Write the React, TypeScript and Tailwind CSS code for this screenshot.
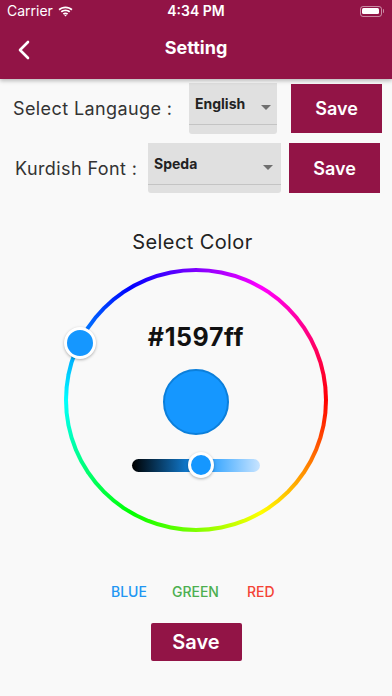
import React from "react";

const font = { fontFamily: "Inter, 'Noto Sans', sans-serif" };

function Arrow() {
  return (
    <svg width="10" height="5" viewBox="0 0 10 5" className="shrink-0">
      <path d="M0 0 L10 0 L5 5 Z" fill="#6f6f6f" />
    </svg>
  );
}

function Dropdown({ label, w, arrowRight }: { label: string; w: string; arrowRight: string }) {
  return (
    <div className={`${w} h-full bg-[#e0e0e0] rounded-b-[3px] flex flex-col`}>
      <div className={`h-[42px] flex items-center justify-between pl-[6px] ${arrowRight} border-b border-[#c4c4c4]`}>
        <span className="text-[14px] font-bold text-[#222]">{label}</span>
        <span className="mt-[8px]"><Arrow /></span>
      </div>
    </div>
  );
}

export default function App() {
  return (
    <div className="w-[392px] h-[696px] bg-[#f9f9f9] overflow-hidden flex flex-col" style={font}>
      {/* Header */}
      <div className="bg-[#921446] h-[79px] shadow-[0_2px_4px_rgba(0,0,0,0.25)] flex flex-col text-white relative z-10">
        <div className="h-[22px] flex items-center justify-between px-[7px]">
          <div className="flex items-center gap-[5px] w-[110px]">
            <span className="text-[14px] leading-none">Carrier</span>
            <svg width="15" height="11" viewBox="0 0 15 11">
              <path d="M7.5 2.2c2.2 0 4.2.8 5.8 2.2l1.2-1.3C12.6 1.4 10.2.4 7.5.4S2.4 1.4.5 3.1l1.2 1.3C3.3 3 5.3 2.2 7.5 2.2z" fill="white" />
              <path d="M7.5 5.3c1.4 0 2.6.5 3.6 1.3l1.2-1.3C11 4.2 9.3 3.5 7.5 3.5S4 4.2 2.7 5.3l1.2 1.3c1-.8 2.2-1.3 3.6-1.3z" fill="white" />
              <path d="M7.5 8.2c.6 0 1.1.2 1.5.5l1.2-1.3c-.7-.6-1.7-1-2.7-1s-2 .4-2.7 1L6 8.7c.4-.3.9-.5 1.5-.5z" fill="white" />
              <path d="M7.5 10.6l1.2-1.3c-.3-.3-.7-.4-1.2-.4s-.9.1-1.2.4z" fill="white" />
            </svg>
          </div>
          <span className="text-[14px] font-semibold leading-none">4:34 PM</span>
          <div className="w-[110px] flex justify-end items-center pr-[1px]">
            <div className="w-[22px] h-[11px] rounded-[3px] border border-white/50 p-[1.5px]">
              <div className="w-full h-full bg-white rounded-[1.5px]" />
            </div>
            <div className="w-[1.5px] h-[4px] bg-white/50 rounded-r-sm ml-[1px]" />
          </div>
        </div>
        <div className="flex-1 flex items-center relative">
          <div className="absolute left-[17px] top-[18px]">
            <svg width="13" height="20" viewBox="0 0 13 20">
              <path d="M11 2 L3 10 L11 18" stroke="white" strokeWidth="2.6" fill="none" strokeLinecap="round" strokeLinejoin="round" />
            </svg>
          </div>
          <div className="w-full text-center text-[18px] font-bold -mt-[6px]">Setting</div>
        </div>
      </div>

      {/* Row 1 */}
      <div className="mt-[4px] h-[51px] flex items-center pl-[13px]">
        <span className="w-[176px] text-[18px] tracking-[0.4px] text-[#333] whitespace-nowrap">Select Langauge :</span>
        <Dropdown label="English" w="w-[88px]" arrowRight="pr-[6px]" />
        <button className="ml-[14px] w-[91px] h-[49px] bg-[#921446] text-white text-[18px] font-semibold">Save</button>
      </div>

      {/* Row 2 */}
      <div className="mt-[9px] h-[50px] flex items-center pl-[15px]">
        <span className="w-[133px] text-[18px] tracking-[0.4px] text-[#333] whitespace-nowrap">Kurdish Font :</span>
        <Dropdown label="Speda" w="w-[133px]" arrowRight="pr-[8px]" />
        <button className="ml-[8px] w-[91px] h-[50px] bg-[#921446] text-white text-[18px] font-semibold">Save</button>
      </div>

      {/* Select Color */}
      <div className="mt-[37px] text-center text-[20px] tracking-[0.4px] leading-[24px] text-[#222] pr-[7px]">Select Color</div>

      {/* Wheel */}
      <div className="mt-[14px] mx-auto relative w-[264px] h-[264px] rounded-full p-[4px] bg-[conic-gradient(from_90deg,#ff0000,#ffff00,#00ff00,#00ffff,#0000ff,#ff00ff,#ff0000)]">
        <div className="w-full h-full rounded-full bg-[#f9f9f9] flex flex-col items-center">
          <div className="pt-[50px] text-[25px] tracking-[0.6px] leading-[30px] font-bold text-[#111]">#1597ff</div>
          <div className="mt-[17px] w-[66px] h-[66px] rounded-full bg-[#1597ff] border-2 border-[#0b7fdb]" />
          <div className="mt-[17px] w-[128px] h-[26px] flex items-center relative">
            <div className="w-full h-[13px] rounded-full bg-[linear-gradient(to_right,#000000,#1597ff_54%,#c8e4ff)]" />
            <div className="absolute left-[56px] top-0 w-[26px] h-[26px] rounded-full bg-[#1597ff] border-[3px] border-white shadow-[0_1px_3px_rgba(0,0,0,0.3)]" />
          </div>
        </div>
        <div className="absolute left-[0px] top-[59px] w-[32px] h-[32px] rounded-full bg-[#1597ff] border-[3px] border-white shadow-[0_1px_3px_rgba(0,0,0,0.3)]" />
      </div>

      {/* Color labels */}
      <div className="mt-[50px] flex pl-[111px] text-[14px] leading-[20px] font-medium">
        <span className="text-[#2196f3]">BLUE</span>
        <span className="ml-[25px] text-[#4caf50]">GREEN</span>
        <span className="ml-[28px] text-[#f44336]">RED</span>
      </div>

      <button className="mt-[21px] mx-auto w-[91px] h-[38px] bg-[#921446] rounded-[2px] text-white text-[20px] font-semibold">Save</button>
    </div>
  );
}
